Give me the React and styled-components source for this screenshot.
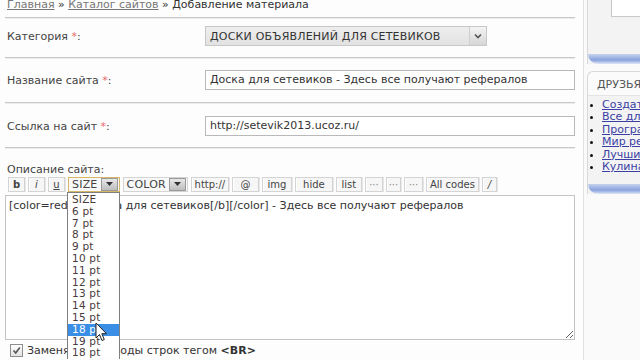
import React from 'react'
import styled, { createGlobalStyle } from 'styled-components'

const GlobalStyle = createGlobalStyle`
  html, body { margin: 0; padding: 0; background: #fdfdfd; }
  body { width: 640px; height: 360px; overflow: hidden; font-family: "DejaVu Sans", Verdana, sans-serif; }
`

const sizes = ['SIZE', '6 pt', '7 pt', '8 pt', '9 pt', '10 pt', '11 pt', '12 pt', '13 pt', '14 pt', '15 pt', '18 pt', '19 pt', '18 pt']
const friends = ['Создать сайт', 'Все для сайта', 'Программы', 'Мир рекламы', 'Лучшие сайты', 'Кулинария']

function App() {
  return (
    <>
      <GlobalStyle />
      <Page>
        <Main>
          <Crumbs>
            <a href="#">Главная</a> » <a href="#">Каталог сайтов</a> » Добавление материала
          </Crumbs>
          <Row pad="8px 0 11px">
            <Label>Категория <Req>*</Req>:</Label>
            <Select>
              <span>ДОСКИ ОБЪЯВЛЕНИЙ ДЛЯ СЕТЕВИКОВ</span>
              <SelectArrow>
                <svg width="8" height="6" viewBox="0 0 8 6"><path d="M1 1.5 L4 4.5 L7 1.5" stroke="#555" strokeWidth="1.6" fill="none" /></svg>
              </SelectArrow>
            </Select>
          </Row>
          <Row pad="12px 0 12px">
            <Label>Название сайта <Req>*</Req>:</Label>
            <Input>Доска для сетевиков - Здесь все получают рефералов</Input>
          </Row>
          <Row pad="13px 0 11px">
            <Label>Ссылка на сайт <Req>*</Req>:</Label>
            <Input>http://setevik2013.ucoz.ru/</Input>
          </Row>
          <DescLabel>Описание сайта:</DescLabel>
          <Toolbar>
            <Btn bold>b</Btn>
            <Btn italic>i</Btn>
            <Btn underline>u</Btn>
            <Combo active>
              <span>SIZE</span>
              <ComboArrow>
                <svg width="7" height="5" viewBox="0 0 7 5"><path d="M0 0 H7 L3.5 4 Z" fill="#333" /></svg>
              </ComboArrow>
              <SizeList>
                {sizes.map((s, i) => (
                  <SizeItem key={i} selected={i === 11}>{s}</SizeItem>
                ))}
              </SizeList>
            </Combo>
            <Combo>
              <span>COLOR</span>
              <ComboArrow>
                <svg width="7" height="5" viewBox="0 0 7 5"><path d="M0 0 H7 L3.5 4 Z" fill="#333" /></svg>
              </ComboArrow>
            </Combo>
            <Btn w="36px">http://</Btn>
            <Btn w="25px">@</Btn>
            <Btn w="28px">img</Btn>
            <Btn w="36px">hide</Btn>
            <Btn w="24px">list</Btn>
            <Btn w="16px" dim>···</Btn>
            <Btn w="13px" dim>···</Btn>
            <Btn w="17px" dim>···</Btn>
            <Btn w="51px">All codes</Btn>
            <Btn w="13px" italic>/</Btn>
          </Toolbar>
          <Editor readOnly value="[color=red][b]Доска для сетевиков[/b][/color] - Здесь все получают рефералов" />
          <CheckRow>
            <Check>
              <svg width="9" height="9" viewBox="0 0 9 9"><path d="M1.5 4.5 L3.7 7 L7.8 1.5" stroke="#555" strokeWidth="1.6" fill="none" /></svg>
            </Check>
            <span>Заменять переводы строк тегом <b>&lt;BR&gt;</b></span>
          </CheckRow>
          <Cursor>
            <svg width="13" height="20" viewBox="0 0 13 20">
              <path d="M1 1 L1 16 L4.5 12.5 L7 18.5 L9.3 17.5 L6.8 11.7 L11.5 11.7 Z" fill="#fff" stroke="#222" strokeWidth="1" strokeLinejoin="round" />
            </svg>
          </Cursor>
        </Main>
        <Side>
          <Panel h="73px" top="-10px">
            <WhiteBox />
            <BlueBar />
          </Panel>
          <Panel h="122px" top="7px">
            <PanelHead>ДРУЗЬЯ</PanelHead>
            <Links>
              {friends.map(f => (
                <li key={f}><a href="#">{f}</a></li>
              ))}
            </Links>
            <BlueBar />
          </Panel>
        </Side>
      </Page>
    </>
  )
}

const Page = styled.div`
  display: flex;
  width: 640px;
  height: 360px;
  overflow: hidden;
`

const Main = styled.div`
  position: relative;
  width: 570px;
  padding: 0 0 0 5px;
  margin-top: -4px;
  font-size: 11px;
  color: #333;
  flex-shrink: 0;
`

const Crumbs = styled.div`
  padding: 2px 2px 5px;
  color: #333;
  line-height: 14px;
  border-bottom: 1px solid #c9c9c9;
  box-shadow: 0 1px 0 #ececec;
  > a { color: #777; text-decoration: underline; }
`

const Row = styled.div`
  display: flex;
  align-items: center;
  padding: ${({ pad }) => pad};
  border-bottom: 1px solid #c9c9c9;
  box-shadow: 0 1px 0 #ececec;
`

const Label = styled.div`
  width: 198px;
  padding-left: 2px;
  color: #444;
`

const Req = styled.span`
  color: #e56a6a;
`

const Select = styled.div`
  width: 276px;
  height: 18px;
  display: flex;
  align-items: center;
  justify-content: space-between;
  padding-left: 4px;
  border: 1px solid #c8c8c8;
  background: linear-gradient(#eeeeee, #e2e2e2);
  color: #333;
  font-size: 11px;
  letter-spacing: 0.2px;
`

const SelectArrow = styled.div`
  width: 16px;
  height: 18px;
  display: flex;
  align-items: center;
  justify-content: center;
  border-left: 1px solid #cfcfcf;
  background: linear-gradient(#f4f4f4, #d6d6d6);
`

const Input = styled.div`
  width: 364px;
  height: 18px;
  line-height: 18px;
  padding-left: 4px;
  border: 1px solid #b9b9b9;
  background: #fff;
  color: #333;
  white-space: nowrap;
  overflow: hidden;
`

const DescLabel = styled.div`
  padding: 15px 0 0 2px;
  line-height: 13px;
  color: #444;
`

const Toolbar = styled.div`
  display: flex;
  gap: 3px;
  margin: 1px 0 3px 3px;
  height: 15px;
  font-size: 10px;
`

const Btn = styled.div`
  min-width: ${({ w }) => w || '15px'};
  height: 13px;
  line-height: 13px;
  text-align: center;
  border: 1px solid #d4d4d4;
  box-shadow: inset 1px 0 0 #fff, 1px 0 0 #e6e6e6;
  background: #f6f6f6;
  color: ${({ dim }) => (dim ? '#888' : '#444')};
  font-weight: ${({ bold }) => (bold ? 700 : 400)};
  font-style: ${({ italic }) => (italic ? 'italic' : 'normal')};
  text-decoration: ${({ underline }) => (underline ? 'underline' : 'none')};
`

const Combo = styled.div`
  position: relative;
  display: flex;
  align-items: center;
  gap: 3px;
  height: 13px;
  padding: 0 1px 0 3px;
  border: 1px solid ${({ active }) => (active ? '#d6b667' : '#d4d4d4')};
  background: #f8f8f8;
  color: #444;
  font-size: 11px;
  letter-spacing: 0.2px;
`

const ComboArrow = styled.div`
  width: 15px;
  height: 11px;
  display: flex;
  align-items: center;
  justify-content: center;
  border: 1px solid #9a9a9a;
  background: linear-gradient(#e8e8e8, #bdbdbd);
`

const SizeList = styled.div`
  position: absolute;
  top: 14px;
  left: -2px;
  width: 51px;
  padding-top: 1px;
  background: #fff;
  border: 1px solid #7f7f7f;
  border-bottom: none;
  z-index: 5;
`

const SizeItem = styled.div`
  height: 11.8px;
  line-height: 11.8px;
  padding-left: 4px;
  font-size: 10.5px;
  color: ${({ selected }) => (selected ? '#fff' : '#4a3b3b')};
  background: ${({ selected }) => (selected ? '#3a8ee6' : 'transparent')};
`

const Editor = styled.textarea`
  display: block;
  box-sizing: border-box;
  width: 570px;
  height: 145px;
  margin: 0;
  padding: 3px 3px;
  border: 1px solid #c4c4c4;
  background: #fff;
  font-family: "DejaVu Sans", Verdana, sans-serif;
  font-size: 11px;
  color: #333;
  resize: both;
  outline: none;
`

const CheckRow = styled.div`
  display: flex;
  align-items: center;
  gap: 4px;
  padding: 4px 0 0 5px;
  color: #333;
`

const Check = styled.span`
  width: 11px;
  height: 11px;
  display: flex;
  align-items: center;
  justify-content: center;
  border: 1px solid #8d8d8d;
  background: linear-gradient(#fff, #e2e2e2);
`

const Cursor = styled.div`
  position: absolute;
  left: 95px;
  top: 326px;
  z-index: 9;
  line-height: 0;
`

const Side = styled.div`
  flex: 1;
  margin-left: 8px;
  padding-left: 3px;
  border-left: 1px solid #e2e2e2;
  background: #fafafa;
  display: flex;
  flex-direction: column;
`

const Panel = styled.div`
  height: ${({ h }) => h};
  margin-top: ${({ top }) => top};
  display: flex;
  flex-direction: column;
  border-left: 1px solid #d8d8d8;
  border-top: 1px solid #d8d8d8;
  border-top-left-radius: 6px;
  background: #f3f3f3;
`

const WhiteBox = styled.div`
  margin: 0 0 0 23px;
  height: 24px;
  border: 1px solid #c9c9c9;
  border-right: none;
  background: #fff;
`

const BlueBar = styled.div`
  margin-top: auto;
  height: 10px;
  border-bottom-left-radius: 10px;
  background: linear-gradient(#c6d3ee, #88a2dc 60%, #dfe6f6);
`

const PanelHead = styled.div`
  padding: 6px 0 4px 9px;
  font-size: 11px;
  color: #555;
  background: #fbfbfb;
  border-bottom: 1px solid #e4e4e4;
  border-top-left-radius: 6px;
  white-space: nowrap;
`

const Links = styled.ul`
  margin: 3px 0 0;
  padding: 0 0 0 14px;
  font-size: 11px;
  line-height: 12.4px;
  list-style: disc;
  white-space: nowrap;
  overflow: hidden;
  > li::marker { color: #111; font-size: 9px; }
  > li > a { color: #3a3fa5; text-decoration: underline; }
`

export default App
